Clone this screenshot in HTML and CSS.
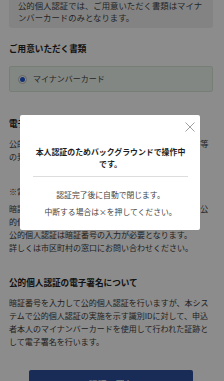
FILE: index.html
```html
<!DOCTYPE html>
<html lang="ja">
<head>
<meta charset="utf-8">
<title>公的個人認証</title>
<link rel="stylesheet" href="styles.css">
</head>
<body>
<div class="page">
  <div class="info">公的個人認証では、ご用意いただく書類はマイナンバーカードのみとなります。</div>
  <h2 class="heading heading-first">ご用意いただく書類</h2>
  <label class="choice"><span class="radio"></span><span class="choice-label">マイナンバーカード</span></label>
  <h2 class="heading heading-mid">電子証明書について</h2>
  <p class="text">公的個人認証サービスにおいては、署名用電子証明書等の発行を受けた方のみご利用いただけます。</p>
  <p class="text note">※電子証明書の有効期限にご注意ください。</p>
  <p class="text text-after-note">暗証番号は利用者ご本人が設定したものです。なお、公的個人認証サービスを利用するためには、<br>公的個人認証は暗証番号の入力が必要となります。<br>詳しくは市区町村の窓口にお問い合わせください。</p>
  <h2 class="heading heading-last">公的個人認証の電子署名について</h2>
  <p class="text">暗証番号を入力して公的個人認証を行いますが、本システムで公的個人認証の実施を示す識別IDに対して、申込者本人のマイナンバーカードを使用して行われた証跡として電子署名を行います。</p>
  <button class="btn" type="button">認証・署名</button>
</div>

<div class="overlay">
  <div class="modal">
    <button class="close" type="button" aria-label="閉じる">
      <svg width="10" height="10" viewBox="0 0 10 10"><path d="M0.5 0.5 L9.5 9.5 M9.5 0.5 L0.5 9.5" stroke="#a0a0a0" stroke-width="1" fill="none"/></svg>
    </button>
    <div class="modal-title">本人認証のためバックグラウンドで操作中です。</div>
    <div class="modal-divider"></div>
    <p class="modal-msg">認証完了後に自動で閉じます。</p>
    <p class="modal-msg modal-msg-second">中断する場合は×を押してください。</p>
  </div>
</div>
</body>
</html>
```

FILE: styles.css
```css
html, body {
  margin: 0;
  padding: 0;
  background: #ffffff;
}

body {
  font-family: "Noto Sans CJK JP", "Noto Sans", sans-serif;
  color: #333333;
  overflow: hidden;
}

.page {
  margin-top: -6px;
  padding: 0 11px 0 9px;
}

.info {
  background: #efefef;
  border-radius: 3px;
  padding: 5px 9px;
  font-size: 8.4px;
  line-height: 12px;
  color: #444444;
}

.heading {
  margin: 0;
  font-size: 8.6px;
  line-height: 12px;
  font-weight: bold;
  color: #222222;
}

.heading-first {
  margin: 14px 0 12px;
}

.heading-mid {
  margin: 25px 0 8px;
}

.heading-last {
  margin: 22px 0 8px;
}

.choice {
  display: flex;
  align-items: center;
  gap: 6px;
  padding: 6px 8px;
  background: #eef6ee;
  border: 1px solid #d6e8d6;
  border-radius: 2px;
  font-size: 8px;
  line-height: 12px;
  color: #444444;
}

.radio {
  width: 9px;
  height: 9px;
  box-sizing: border-box;
  border: 1px solid #b8b8b8;
  border-radius: 50%;
  background: #ffffff;
  display: flex;
  align-items: center;
  justify-content: center;
}

.radio::after {
  content: "";
  width: 5px;
  height: 5px;
  border-radius: 50%;
  background: #1f55c8;
}

.text {
  margin: 0;
  font-size: 8px;
  line-height: 13px;
  color: #3a3a3a;
}

.note {
  margin-top: 22px;
}

.text-after-note {
  margin-top: 4px;
}

.btn {
  display: block;
  width: 164px;
  margin: 22px auto 0;
  padding: 8px 0;
  border: 0;
  border-radius: 2px;
  background: #2e4f9e;
  color: #ffffff;
  font-family: inherit;
  font-size: 9px;
  line-height: 14px;
}

.overlay {
  position: fixed;
  inset: 0;
  background: rgba(0, 0, 0, 0.45);
}

.modal {
  position: absolute;
  top: 115px;
  left: 20px;
  width: 180px;
  box-sizing: border-box;
  padding: 31px 12px 12px 13px;
  background: #ffffff;
  border-radius: 2px;
}

.close {
  position: absolute;
  top: 7px;
  right: 5px;
  width: 10px;
  height: 10px;
  padding: 0;
  border: 0;
  background: none;
  display: flex;
}

.modal-title {
  font-size: 7.9px;
  line-height: 12px;
  font-weight: bold;
  color: #1e1e1e;
  text-align: center;
}

.modal-divider {
  margin: 6px 0 12px;
  border-top: 1px solid #dddddd;
}

.modal-msg {
  margin: 0;
  font-size: 7.8px;
  line-height: 12px;
  color: #444444;
  text-align: center;
}

.modal-msg-second {
  margin-top: 5px;
}
```
